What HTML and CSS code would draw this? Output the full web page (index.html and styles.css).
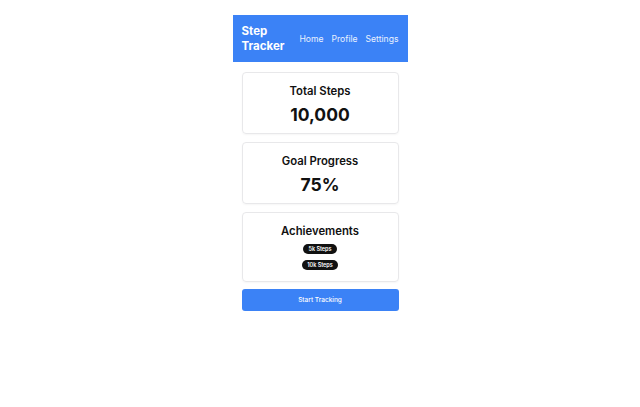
FILE: index.html
```html
<!DOCTYPE html>
<html>
<head>
<meta charset="utf-8">
<link rel="stylesheet" href="styles.css">
</head>
<body>
<div class="app">
  <header class="header">
    <div class="brand">Step<br>Tracker</div>
    <nav class="nav">
      <a>Home</a>
      <a>Profile</a>
      <a>Settings</a>
    </nav>
  </header>
  <main class="main">
    <section class="card">
      <h2 class="card-title">Total Steps</h2>
      <div class="card-value">10,000</div>
    </section>
    <section class="card">
      <h2 class="card-title">Goal Progress</h2>
      <div class="card-value">75%</div>
    </section>
    <section class="card card-tall">
      <h2 class="card-title">Achievements</h2>
      <div class="badges">
        <span class="badge">5k Steps</span>
        <span class="badge">10k Steps</span>
      </div>
    </section>
    <button class="btn">Start Tracking</button>
  </main>
</div>
</body>
</html>
```
FILE: styles.css
```css
* { box-sizing: border-box; }
body {
  margin: 0;
  padding-top: 15px;
  font-family: Inter, "Noto Sans", sans-serif;
  background: #fff;
  color: #111;
}
.app {
  width: 175px;
  margin: 0 auto;
}
.header {
  background: #3b82f6;
  color: #fff;
  height: 47px;
  padding: 0 9px;
  display: flex;
  align-items: center;
  justify-content: space-between;
}
.brand {
  font-weight: 700;
  font-size: 11.5px;
  line-height: 15px;
  padding-top: 1px;
}
.nav {
  display: flex;
  gap: 8px;
  font-size: 8.6px;
}
.nav a { color: #eaf1fe; }
.main {
  padding: 10px 9px;
  display: flex;
  flex-direction: column;
  gap: 8px;
}
.card {
  border: 1px solid #e8e8ea;
  border-radius: 4px;
  box-shadow: 0 1px 2px rgba(0,0,0,0.04);
  padding: 10px 8px;
  display: flex;
  flex-direction: column;
  align-items: center;
  height: 62px;
}
.card-tall { height: 70px; }
.card-title {
  margin: 0;
  font-size: 11.3px;
  font-weight: 600;
  line-height: 17px;
}
.card-value {
  font-size: 17.5px;
  font-weight: 700;
  line-height: 24px;
  margin-top: 3px;
}
.badges {
  display: flex;
  flex-direction: column;
  align-items: center;
  gap: 6px;
  margin-top: 4px;
}
.badge {
  background: #111;
  color: #fff;
  font-size: 5.5px;
  font-weight: 600;
  line-height: 10px;
  padding: 0 5px;
  border-radius: 6px;
}
.btn {
  margin-top: -1px;
  height: 22px;
  border: none;
  border-radius: 3px;
  background: #3b82f6;
  color: #fff;
  font-family: inherit;
  font-size: 6.5px;
  font-weight: 500;
}
```
